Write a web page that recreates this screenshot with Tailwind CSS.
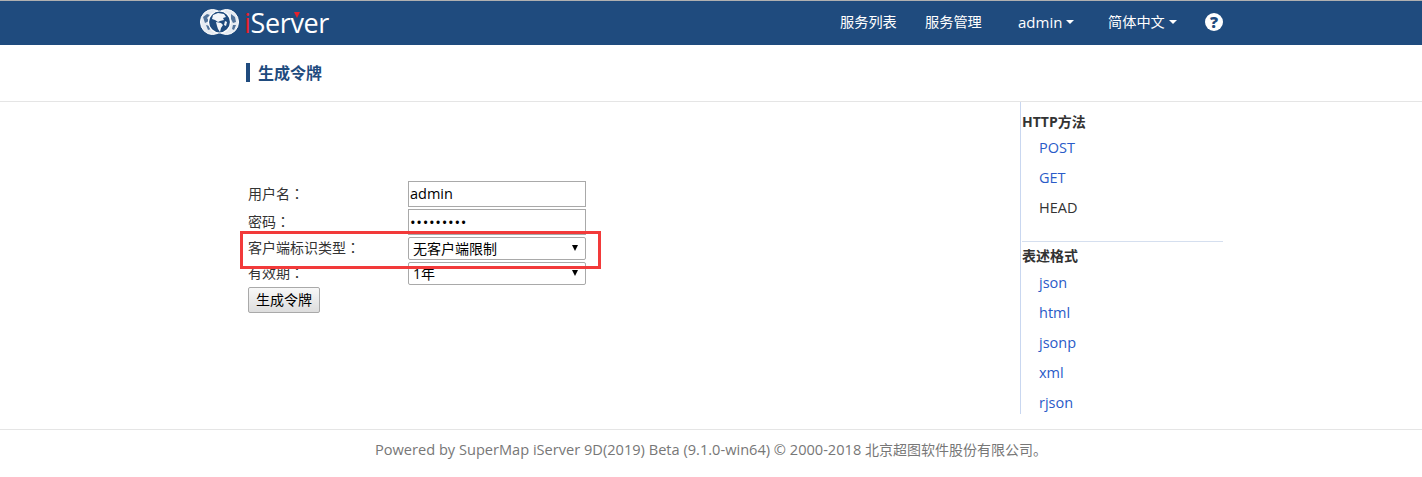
<!DOCTYPE html>
<html lang="zh-CN">
<head>
  <meta charset="UTF-8" />
  <title>生成令牌</title>
  <script src="https://cdn.jsdelivr.net/npm/@tailwindcss/browser@4"></script>
</head>
<body class="relative bg-white h-[477px] overflow-hidden font-['Open_Sans','Noto_Sans_CJK_SC',sans-serif] text-[14px] text-[#333]">
  <!-- Navbar -->
  <header class="h-[45px] bg-[#1f4b7e] border-t border-[#b0b0b0] flex items-center text-white">
    <div class="ml-[200px] flex items-center w-[139px] pb-[2px]">
      <svg width="39" height="26" viewBox="0 0 39 26" class="shrink-0">
        <ellipse cx="12.5" cy="13" rx="12" ry="12.5" fill="#e6ebf2" stroke="#fff" />
        <ellipse cx="26.5" cy="13" rx="12" ry="12.5" fill="#e6ebf2" stroke="#fff" />
        <path d="M3 8l4-3 3 1-3 3 2 3-4 2zM6 16l4 1 1 3-3 1zM31 5l4 3 1 5-3 1-2-4zM33 16l3 0-2 5-2-1z" fill="#1f4b7e" fill-opacity="0.75" />
        <circle cx="19.5" cy="13" r="11" fill="#1f4b7e" stroke="#fff" stroke-width="1.2" />
        <path d="M13 6l5-2 6 1 2 3-3 1 1 2-4 1-2 1-3-2-3-1zM16 13l5 1 2 2-2 3-1 4-2-3-1-3zM25 12l2 1-1 4-2-1z" fill="#f2f5f9" />
      </svg>
      <span class="relative ml-[5px] text-[27px] leading-none tracking-[-0.35px] font-['Open_Sans',sans-serif]"><span class="text-[#e8202a]">i</span>Server<span class="absolute left-[50px] top-[3px] border-x-[3px] border-x-transparent border-t-[6px] border-t-[#e8202a]"></span></span>
    </div>
    <nav class="ml-[501px] flex items-center h-full pb-[2px]">
      <a class="w-[85px] text-[14.2px]">服务列表</a>
      <a class="w-[93px] text-[14.2px]">服务管理</a>
      <a class="w-[90px] flex items-center text-[15px]">admin<span class="ml-[4px] border-x-[4px] border-x-transparent border-t-[4px] border-t-white"></span></a>
      <a class="w-[97px] flex items-center text-[14.2px]">简体中文<span class="ml-[4px] border-x-[4px] border-x-transparent border-t-[4px] border-t-white"></span></a>
      <span class="w-[18px] h-[18px] rounded-full bg-white text-[#1f4b7e] flex items-center justify-center text-[16px] font-extrabold leading-none">?</span>
    </nav>
  </header>

  <!-- Title -->
  <div class="h-[57px] border-b border-[#e5e5e5] pl-[246px] pt-[18px]">
    <h1 class="border-l-4 border-[#1f4b7e] pl-[8px] h-[19px] flex items-center text-[16px] font-bold text-[#1f4b7e]">生成令牌</h1>
  </div>

  <!-- Content -->
  <div class="flex h-[312px]">
    <form class="ml-[248px] w-[772px] pt-[79px]">
      <div class="flex h-[28px] items-start">
        <label class="w-[160px] pt-[2px]">用户名<span lang="zh-TW" class="font-['Noto_Sans_CJK_TC']">：</span></label>
        <input type="text" value="admin" class="w-[178px] h-[26px] border border-[#a9a9a9] px-[1px] pb-[1px] text-[14.5px] text-black" />
      </div>
      <div class="flex h-[28px] items-start">
        <label class="w-[160px] pt-[2px]">密码<span lang="zh-TW" class="font-['Noto_Sans_CJK_TC']">：</span></label>
        <input type="password" value="123456789" class="w-[178px] h-[26px] border border-[#a9a9a9] px-[1px] text-[15px] tracking-[0.7px] text-black" />
      </div>
      <div class="flex h-[25px] items-start">
        <label class="w-[160px]">客户端标识类型<span lang="zh-TW" class="font-['Noto_Sans_CJK_TC']">：</span></label>
        <div class="w-[178px] h-[23px] border border-[#a9a9a9] rounded-[2px] pl-[4px] pr-[7px] pb-[1px] flex items-center justify-between text-black bg-white">无客户端限制<span class="mb-[1px] border-x-[3px] border-x-transparent border-t-[6px] border-t-black"></span></div>
      </div>
      <div class="flex h-[25px] items-start">
        <label class="w-[160px]">有效期<span lang="zh-TW" class="font-['Noto_Sans_CJK_TC']">：</span></label>
        <div class="w-[178px] h-[23px] border border-[#a9a9a9] rounded-[2px] pl-[4px] pr-[7px] pb-[1px] flex items-center justify-between text-black bg-white">1年<span class="mb-[1px] border-x-[3px] border-x-transparent border-t-[6px] border-t-black"></span></div>
      </div>
      <button type="button" class="w-[72px] h-[26px] border border-[#a9a9a9] rounded-[2px] bg-gradient-to-b from-[#f8f8f8] to-[#dddddd] pb-[1px] text-black">生成令牌</button>
    </form>

    <aside class="w-[203px] border-l border-[#c9d7f0] pl-[1px]">
      <h3 class="mt-[11px] h-[18px] leading-[18px] text-[14px] font-bold text-[#333]">HTTP方法</h3>
      <ul class="pl-[17px] pt-[2px] text-[14.5px]">
        <li class="h-[30px] leading-[30px] text-[#2a5bc8]">POST</li>
        <li class="h-[30px] leading-[30px] text-[#2a5bc8]">GET</li>
        <li class="h-[30px] leading-[30px]">HEAD</li>
      </ul>
      <hr class="mt-[18px] border-[#d5dfef]" />
      <h3 class="mt-[5px] h-[18px] leading-[18px] text-[14px] font-bold text-[#333]">表述格式</h3>
      <ul class="pl-[17px] pt-[3px] text-[14.5px]">
        <li class="h-[30px] leading-[30px] text-[#2a5bc8]">json</li>
        <li class="h-[30px] leading-[30px] text-[#2a5bc8]">html</li>
        <li class="h-[30px] leading-[30px] text-[#2a5bc8]">jsonp</li>
        <li class="h-[30px] leading-[30px] text-[#2a5bc8]">xml</li>
        <li class="h-[30px] leading-[30px] text-[#2a5bc8]">rjson</li>
      </ul>
    </aside>
  </div>

  <!-- Footer -->
  <footer class="mt-[15px] border-t border-[#e5e5e5] pt-[9px] text-center text-[14.6px] leading-[20px] text-[#777]">Powered by SuperMap iServer 9D(2019) Beta (9.1.0-win64) © 2000-2018 <span class="text-[14px]">北京超图软件股份有限公司。</span></footer>

  <!-- Red annotation -->
  <div class="absolute left-[240px] top-[231px] w-[361px] h-[38px] border-[3px] border-[#f23a3a]"></div>
</body>
</html>
